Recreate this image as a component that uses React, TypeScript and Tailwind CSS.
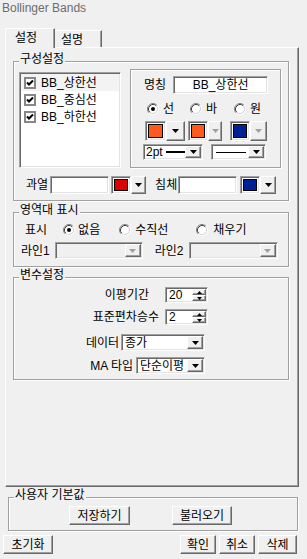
import React from "react";

const F = "font-['Liberation_Sans','Noto_Sans_CJK_KR',sans-serif]";
const SUNK =
  "border border-t-[#a0a0a0] border-l-[#a0a0a0] border-b-white border-r-white shadow-[inset_1px_1px_0_#696969,inset_-1px_-1px_0_#e3e3e3]";
const RAISED =
  "border border-t-white border-l-white border-b-[#696969] border-r-[#696969] shadow-[inset_-1px_-1px_0_#a0a0a0]";
const ETCH = "border border-[#a0a0a0] shadow-[inset_1px_1px_0_#fff,1px_1px_0_#fff]";

function Arrow({ dis = false, up = false, w = 7, h = 4 }: { dis?: boolean; up?: boolean; w?: number; h?: number }) {
  return (
    <svg width={w} height={h} viewBox={`0 0 ${w} ${h}`} className="block">
      <path d={up ? `M0 ${h}H${w}L${w / 2} 0Z` : `M0 0H${w}L${w / 2} ${h}Z`} fill={dis ? "#a0a0a0" : "#000"} />
    </svg>
  );
}

function ArrowBtn({ cls, dis = false }: { cls: string; dis?: boolean }) {
  return (
    <div className={`${RAISED} bg-[#f0f0f0] h-full flex items-center justify-center shrink-0 ${cls}`}>
      <Arrow dis={dis} />
    </div>
  );
}

function Swatch({ cls, color }: { cls: string; color: string }) {
  return (
    <div className={`${SUNK} bg-white p-[2px] h-full flex shrink-0 ${cls}`}>
      <div className={`flex-1 border border-black ${color}`} />
    </div>
  );
}

function Check() {
  return (
    <div className="w-[12px] h-[12px] border-2 border-[#878787] bg-white flex items-center justify-center shrink-0">
      <svg width="8" height="8" viewBox="0 0 8 8" className="block">
        <path d="M1 3.5L3 5.5L7 1.5" stroke="#000" strokeWidth="2" fill="none" />
      </svg>
    </div>
  );
}

function Radio({ on = false }: { on?: boolean }) {
  return (
    <svg width="12" height="12" viewBox="0 0 12 12" className="block shrink-0">
      <circle cx="6" cy="6" r="4.5" fill="#fff" />
      <path d="M2.11 9.89A5.5 5.5 0 0 1 9.89 2.11" stroke="#808080" fill="none" />
      <path d="M2.82 9.18A4.5 4.5 0 0 1 9.18 2.82" stroke="#404040" fill="none" />
      <path d="M9.89 2.11A5.5 5.5 0 0 1 2.11 9.89" stroke="#ffffff" fill="none" />
      <path d="M9.18 2.82A4.5 4.5 0 0 1 2.82 9.18" stroke="#d4d4d4" fill="none" />
      {on && <circle cx="6" cy="6" r="2" fill="#000" />}
    </svg>
  );
}

function Group({ label, cls, children }: { label: string; cls: string; children?: React.ReactNode }) {
  return (
    <div className={`relative ${ETCH} ${cls}`}>
      <span className="absolute left-[5px] -top-[10px] px-[1px] bg-[#f0f0f0] leading-[14px] whitespace-nowrap">{label}</span>
      {children}
    </div>
  );
}

function Btn({ cls, children }: { cls: string; children: React.ReactNode }) {
  return (
    <div className={`${RAISED} bg-[#f0f0f0] h-full flex items-center justify-center shrink-0 ${cls}`}>{children}</div>
  );
}

function Spin({ value }: { value: string }) {
  return (
    <div className={`${SUNK} bg-white p-[1px] flex w-[43px] h-full ml-[0px]`}>
      <div className="flex-1 pl-[2px] flex items-center">{value}</div>
      <div className="w-[14px] flex flex-col">
        <div className={`${RAISED} bg-[#f0f0f0] flex-1 flex items-center justify-center`}>
          <Arrow up w={5} h={3} />
        </div>
        <div className={`${RAISED} bg-[#f0f0f0] flex-1 flex items-center justify-center`}>
          <Arrow w={5} h={3} />
        </div>
      </div>
    </div>
  );
}

export default function App() {
  return (
    <div className={`${F} w-[307px] h-[559px] bg-[#f0f0f0] text-[12px] leading-[14px] text-black overflow-hidden flex flex-col`}>
      <div className="h-[28px] pl-[2px] pt-[1px] text-[12px] leading-[14px] text-[#6d6d6d] shrink-0">Bollinger Bands</div>

      {/* tabs */}
      <div className="flex items-start h-[19px] ml-[5px] relative z-10 shrink-0">
        <div className="w-[50px] h-[20px] bg-[#f0f0f0] border-t border-l border-t-white border-l-white border-r border-r-[#696969] shadow-[inset_-1px_0_0_#a0a0a0] flex items-center pl-[9px] pb-[1px]">
          설정
        </div>
        <div className="w-[47px] h-[17px] mt-[2px] border-t border-r border-t-white border-r-[#696969] shadow-[inset_-1px_0_0_#a0a0a0] flex items-center pl-[6px] pt-[1px]">
          설명
        </div>
      </div>

      {/* panel */}
      <div className="ml-[5px] w-[294px] h-[440px] shrink-0 border border-t-white border-l-white border-b-[#696969] border-r-[#696969] shadow-[inset_-1px_-1px_0_#a0a0a0] flex flex-col">
        {/* 구성설정 */}
        <Group label="구성설정" cls="w-[276px] h-[140px] ml-[7px] mt-[13px] shrink-0 flex flex-col">
          <div className="flex items-start pt-[7px] pl-[5px]">
            <div className={`${SUNK} bg-white p-[1px] mt-[3px] w-[102px] h-[96px] flex flex-col`}>
              {["BB_상한선", "BB_중심선", "BB_하한선"].map((t, i) => (
                <div
                  key={t}
                  className={`h-[17px] flex items-center pl-[3px] gap-[5px] ${i === 0 ? "bg-[#f3f3f3]" : ""}`}
                >
                  <Check />
                  <span>{t}</span>
                </div>
              ))}
            </div>
            <div className={`${ETCH} ml-[9px] w-[151px] h-[99px] flex flex-col`}>
              <div className="flex items-center mt-[6px] pl-[13px] h-[18px]">
                <span>명칭</span>
                <div className={`${SUNK} bg-white ml-[7px] w-[95px] h-[18px] flex items-center justify-center`}>
                  BB_상한선
                </div>
              </div>
              <div className="flex items-center mt-[8px] h-[14px]">
                <div className="flex items-center gap-[4px] ml-[16px]">
                  <Radio on />
                  <span>선</span>
                </div>
                <div className="flex items-center gap-[4px] ml-[16px]">
                  <Radio />
                  <span>바</span>
                </div>
                <div className="flex items-center gap-[4px] ml-[17px]">
                  <Radio />
                  <span>원</span>
                </div>
              </div>
              <div className="flex mt-[5px] h-[20px] pl-[14px]">
                <Swatch cls="w-[21px]" color="bg-[#ff5a1e]" />
                <ArrowBtn cls="w-[19px]" />
                <Swatch cls="w-[20px] ml-[3px]" color="bg-[#ff5a1e]" />
                <ArrowBtn cls="w-[14px]" dis />
                <Swatch cls="w-[20px] ml-[8px]" color="bg-[#002096]" />
                <ArrowBtn cls="w-[17px]" dis />
              </div>
              <div className="flex mt-[3px] h-[16px] pl-[12px]">
                <div className={`${SUNK} bg-white p-[1px] w-[60px] h-full flex`}>
                  <div className="flex-1 flex items-center pl-[1px]">
                    <span>2pt</span>
                    <div className="ml-[3px] w-[19px] h-[2px] bg-black" />
                  </div>
                  <ArrowBtn cls="w-[16px]" />
                </div>
                <div className={`${SUNK} bg-white p-[1px] ml-[8px] w-[55px] h-full flex`}>
                  <div className="flex-1 flex items-center pl-[3px] pr-[2px]">
                    <div className="w-full h-[1px] bg-black" />
                  </div>
                  <ArrowBtn cls="w-[16px]" />
                </div>
              </div>
            </div>
          </div>
          <div className="flex items-center mt-[8px] h-[18px] pl-[12px]">
            <span>과열</span>
            <div className={`${SUNK} bg-white ml-[2px] w-[59px] h-full`} />
            <Swatch cls="w-[20px] ml-[2px]" color="bg-[#dc0000]" />
            <ArrowBtn cls="w-[15px]" />
            <span className="ml-[9px]">침체</span>
            <div className={`${SUNK} bg-white ml-[1px] w-[59px] h-full`} />
            <Swatch cls="w-[20px] ml-[3px]" color="bg-[#002096]" />
            <ArrowBtn cls="w-[16px]" />
          </div>
        </Group>

        {/* 영역대 표시 */}
        <Group label="영역대 표시" cls="w-[276px] h-[55px] ml-[7px] mt-[11px] shrink-0 flex flex-col">
          <div className="flex items-center mt-[10px] h-[14px] pl-[11px]">
            <span>표시</span>
            <div className="ml-[16px]"><Radio on /></div>
            <span className="ml-[3px]">없음</span>
            <div className="ml-[19px]"><Radio /></div>
            <span className="ml-[4px]">수직선</span>
            <div className="ml-[28px]"><Radio /></div>
            <span className="ml-[5px]">채우기</span>
          </div>
          <div className="flex items-center mt-[5px] h-[17px] pl-[7px]">
            <span>라인1</span>
            <div className={`${SUNK} bg-[#f0f0f0] p-[1px] ml-[5px] w-[88px] h-full flex justify-end`}>
              <ArrowBtn cls="w-[16px]" dis />
            </div>
            <span className="ml-[12px]">라인2</span>
            <div className={`${SUNK} bg-[#f0f0f0] p-[1px] ml-[5px] w-[89px] h-full flex justify-end`}>
              <ArrowBtn cls="w-[16px]" dis />
            </div>
          </div>
        </Group>

        {/* 변수설정 */}
        <Group label="변수설정" cls="w-[276px] h-[103px] ml-[7px] mt-[10px] shrink-0 flex flex-col">
          <div className="flex items-center justify-end mt-[9px] h-[16px] pr-[80px]">
            <span>이평기간</span>
            <div className="ml-[16px] h-full flex"><Spin value="20" /></div>
          </div>
          <div className="flex items-center justify-end mt-[6px] h-[16px] pr-[80px]">
            <span>표준편차승수</span>
            <div className="ml-[6px] h-full flex"><Spin value="2" /></div>
          </div>
          <div className="flex items-center justify-end mt-[9px] h-[17px] pr-[83px]">
            <span>데이터</span>
            <div className={`${SUNK} bg-white p-[1px] ml-[2px] w-[84px] h-full flex`}>
              <div className="flex-1 flex items-center pl-[2px]">종가</div>
              <ArrowBtn cls="w-[16px]" />
            </div>
          </div>
          <div className="flex items-center justify-end mt-[6px] h-[17px] pr-[83px]">
            <span>MA 타입</span>
            <div className={`${SUNK} bg-white p-[1px] ml-[3px] w-[69px] h-full flex`}>
              <div className="flex-1 flex items-center pl-[2px]">단순이평</div>
              <ArrowBtn cls="w-[16px]" />
            </div>
          </div>
        </Group>
      </div>

      {/* 사용자 기본값 */}
      <Group label="사용자 기본값" cls="w-[290px] h-[34px] ml-[8px] mt-[10px] shrink-0 flex flex-col">
        <div className="flex mt-[8px] h-[19px]">
          <Btn cls="w-[61px] ml-[60px]">저장하기</Btn>
          <Btn cls="w-[60px] ml-[42px]">불러오기</Btn>
        </div>
      </Group>

      <div className="flex mt-[4px] h-[19px] shrink-0">
        <Btn cls="w-[50px] ml-[3px]">초기화</Btn>
        <Btn cls="w-[36px] ml-[127px]">확인</Btn>
        <Btn cls="w-[36px] ml-[3px]">취소</Btn>
        <Btn cls="w-[39px] ml-[3px]">삭제</Btn>
      </div>
    </div>
  );
}
